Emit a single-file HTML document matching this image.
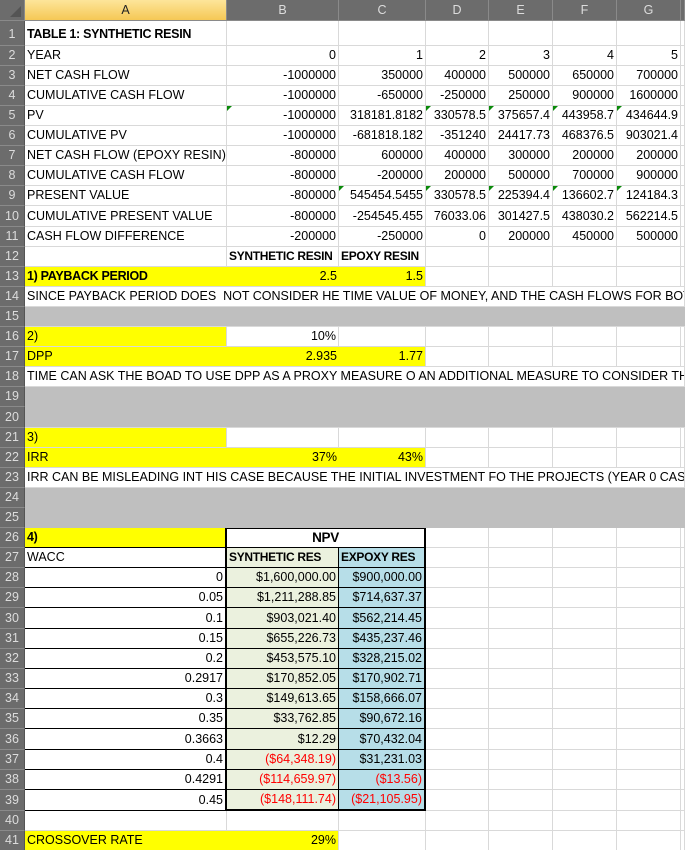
<!DOCTYPE html>
<html><head><meta charset="utf-8"><style>
html,body{margin:0;padding:0;background:#fff;width:685px;height:850px;overflow:hidden}
table{border-collapse:separate;border-spacing:0;table-layout:fixed;width:685px;font-family:"Liberation Sans",Arial,sans-serif;font-size:12.5px;color:#000}
td{border-right:1px solid #d9d9d9;border-bottom:1px solid #d9d9d9;padding:0 2px;white-space:nowrap;overflow:hidden;height:20px;line-height:19px;box-sizing:border-box;position:relative}
tr.t td{height:21px;line-height:20px}
td.h{background:#6c6c6c;color:#dcdcdc;border-right:1px solid #8a8a8a;border-bottom:1px solid #8a8a8a;text-align:center;padding:0;font-size:12.5px}
td.rh{background:#6c6c6c;color:#dcdcdc;border-right:1px solid #555;border-bottom:1px solid #8a8a8a;text-align:center;padding:0}
td.ha{background:linear-gradient(#fde59a,#f5c855);color:#222}
.r{text-align:right}
.b{font-weight:bold;letter-spacing:-0.3px}
.y{background:#ffff00}
.g{background:#bfbfbf;border-right:none}
.gr{background:#ebf1de}
.bl{background:#b7dee8}
.red{color:#ff0000}
.tr{position:absolute;left:0;top:0;width:0;height:0;border-top:5px solid #0a8a0a;border-right:5px solid transparent}
.br{border-right:2px solid #000}
.bb{border-bottom:1px solid #000}
.bk{border-right:1px solid #000;border-bottom:1px solid #000}
.bbt{border-bottom:2px solid #000}
</style></head><body>
<table>
<colgroup><col style="width:25px"><col style="width:202px"><col style="width:112px"><col style="width:87px"><col style="width:63px"><col style="width:64px"><col style="width:64px"><col style="width:64px"><col style="width:4px"></colgroup>
<tr><td class="h" style="height:21px;line-height:20px;position:relative"><div style="position:absolute;right:3px;bottom:3px;width:0;height:0;border-left:11px solid transparent;border-bottom:11px solid #545454"></div></td><td class="h ha" style="height:21px;line-height:20px">A</td><td class="h">B</td><td class="h">C</td><td class="h">D</td><td class="h">E</td><td class="h">F</td><td class="h">G</td><td class="h"></td></tr>
<tr><td class="rh" style="height:23px;line-height:22px;padding-top:2px">1</td><td class="b" style="height:23px;line-height:22px;padding-top:2px">TABLE 1: SYNTHETIC RESIN</td><td style="height:23px"></td><td></td><td></td><td></td><td></td><td></td><td></td></tr>
<tr><td class="rh">2</td><td>YEAR</td><td class="r">0</td><td class="r">1</td><td class="r">2</td><td class="r">3</td><td class="r">4</td><td class="r">5</td><td></td></tr>
<tr><td class="rh">3</td><td>NET CASH FLOW</td><td class="r">-1000000</td><td class="r">350000</td><td class="r">400000</td><td class="r">500000</td><td class="r">650000</td><td class="r">700000</td><td></td></tr>
<tr><td class="rh">4</td><td>CUMULATIVE CASH FLOW</td><td class="r">-1000000</td><td class="r">-650000</td><td class="r">-250000</td><td class="r">250000</td><td class="r">900000</td><td class="r">1600000</td><td></td></tr>
<tr><td class="rh">5</td><td>PV</td><td class="r"><span class="tr"></span>-1000000</td><td class="r">318181.8182</td><td class="r"><span class="tr"></span>330578.5</td><td class="r"><span class="tr"></span>375657.4</td><td class="r"><span class="tr"></span>443958.7</td><td class="r"><span class="tr"></span>434644.9</td><td></td></tr>
<tr><td class="rh">6</td><td>CUMULATIVE PV</td><td class="r">-1000000</td><td class="r">-681818.182</td><td class="r">-351240</td><td class="r">24417.73</td><td class="r">468376.5</td><td class="r">903021.4</td><td></td></tr>
<tr><td class="rh">7</td><td>NET CASH FLOW (EPOXY RESIN)</td><td class="r">-800000</td><td class="r">600000</td><td class="r">400000</td><td class="r">300000</td><td class="r">200000</td><td class="r">200000</td><td></td></tr>
<tr><td class="rh">8</td><td>CUMULATIVE CASH FLOW</td><td class="r">-800000</td><td class="r">-200000</td><td class="r">200000</td><td class="r">500000</td><td class="r">700000</td><td class="r">900000</td><td></td></tr>
<tr><td class="rh">9</td><td>PRESENT VALUE</td><td class="r">-800000</td><td class="r"><span class="tr"></span>545454.5455</td><td class="r"><span class="tr"></span>330578.5</td><td class="r"><span class="tr"></span>225394.4</td><td class="r"><span class="tr"></span>136602.7</td><td class="r"><span class="tr"></span>124184.3</td><td></td></tr>
<tr class="t"><td class="rh">10</td><td>CUMULATIVE PRESENT VALUE</td><td class="r">-800000</td><td class="r">-254545.455</td><td class="r">76033.06</td><td class="r">301427.5</td><td class="r">438030.2</td><td class="r">562214.5</td><td></td></tr>
<tr><td class="rh">11</td><td>CASH FLOW DIFFERENCE</td><td class="r">-200000</td><td class="r">-250000</td><td class="r">0</td><td class="r">200000</td><td class="r">450000</td><td class="r">500000</td><td></td></tr>
<tr><td class="rh">12</td><td></td><td class="b" style="font-size:12px">SYNTHETIC RESIN</td><td class="b" style="font-size:12px">EPOXY RESIN</td><td></td><td></td><td></td><td></td><td></td></tr>
<tr><td class="rh">13</td><td class="y b" style="border-right:none">1) PAYBACK PERIOD</td><td class="y r" style="border-right:none">2.5</td><td class="y r">1.5</td><td></td><td></td><td></td><td></td><td></td></tr>
<tr><td class="rh">14</td><td colspan="8">SINCE PAYBACK PERIOD DOES&nbsp; NOT CONSIDER HE TIME VALUE OF MONEY, AND THE CASH FLOWS FOR BOTH PROJECTS</td></tr>
<tr><td class="rh">15</td><td colspan="8" class="g"></td></tr>
<tr><td class="rh">16</td><td class="y">2)</td><td class="r">10%</td><td></td><td></td><td></td><td></td><td></td><td></td></tr>
<tr><td class="rh">17</td><td class="y" style="border-right:none">DPP</td><td class="y r" style="border-right:none">2.935</td><td class="y r">1.77</td><td></td><td></td><td></td><td></td><td></td></tr>
<tr><td class="rh">18</td><td colspan="8">TIME CAN ASK THE BOAD TO USE DPP AS A PROXY MEASURE O AN ADDITIONAL MEASURE TO CONSIDER THE TIME</td></tr>
<tr><td class="rh">19</td><td colspan="8" class="g" style="border-bottom-color:#bfbfbf"></td></tr>
<tr class="t"><td class="rh">20</td><td colspan="8" class="g"></td></tr>
<tr><td class="rh">21</td><td class="y">3)</td><td></td><td></td><td></td><td></td><td></td><td></td><td></td></tr>
<tr><td class="rh">22</td><td class="y" style="border-right:none">IRR</td><td class="y r" style="border-right:none">37%</td><td class="y r">43%</td><td></td><td></td><td></td><td></td><td></td></tr>
<tr><td class="rh">23</td><td colspan="8">IRR CAN BE MISLEADING INT HIS CASE BECAUSE THE INITIAL INVESTMENT FO THE PROJECTS (YEAR 0 CASH FLOWS)</td></tr>
<tr><td class="rh">24</td><td colspan="8" class="g" style="border-bottom-color:#bfbfbf"></td></tr>
<tr><td class="rh">25</td><td colspan="8" class="g" style="border-bottom-color:#bfbfbf"></td></tr>
<tr><td class="rh">26</td><td class="y b br bb">4)</td><td colspan="2" class="b br" style="text-align:center;border-top:1px solid #000;border-bottom:1px solid #000;font-size:13.5px;line-height:18px">NPV</td><td></td><td></td><td></td><td></td><td></td></tr>
<tr><td class="rh">27</td><td class="br bb">WACC</td><td class="b gr bk" style="font-size:12px">SYNTHETIC RES</td><td class="b bl br bb" style="font-size:12px">EXPOXY RES</td><td></td><td></td><td></td><td></td><td></td></tr>
<tr><td class="rh">28</td><td class="r br bb">0</td><td class="r gr bk">$1,600,000.00</td><td class="r bl br bb">$900,000.00</td><td></td><td></td><td></td><td></td><td></td></tr>
<tr><td class="rh">29</td><td class="r br bb">0.05</td><td class="r gr bk">$1,211,288.85</td><td class="r bl br bb">$714,637.37</td><td></td><td></td><td></td><td></td><td></td></tr>
<tr class="t"><td class="rh">30</td><td class="r br bb">0.1</td><td class="r gr bk">$903,021.40</td><td class="r bl br bb">$562,214.45</td><td></td><td></td><td></td><td></td><td></td></tr>
<tr><td class="rh">31</td><td class="r br bb">0.15</td><td class="r gr bk">$655,226.73</td><td class="r bl br bb">$435,237.46</td><td></td><td></td><td></td><td></td><td></td></tr>
<tr><td class="rh">32</td><td class="r br bb">0.2</td><td class="r gr bk">$453,575.10</td><td class="r bl br bb">$328,215.02</td><td></td><td></td><td></td><td></td><td></td></tr>
<tr><td class="rh">33</td><td class="r br bb">0.2917</td><td class="r gr bk">$170,852.05</td><td class="r bl br bb">$170,902.71</td><td></td><td></td><td></td><td></td><td></td></tr>
<tr><td class="rh">34</td><td class="r br bb">0.3</td><td class="r gr bk">$149,613.65</td><td class="r bl br bb">$158,666.07</td><td></td><td></td><td></td><td></td><td></td></tr>
<tr><td class="rh">35</td><td class="r br bb">0.35</td><td class="r gr bk">$33,762.85</td><td class="r bl br bb">$90,672.16</td><td></td><td></td><td></td><td></td><td></td></tr>
<tr class="t"><td class="rh">36</td><td class="r br bb">0.3663</td><td class="r gr bk">$12.29</td><td class="r bl br bb">$70,432.04</td><td></td><td></td><td></td><td></td><td></td></tr>
<tr><td class="rh">37</td><td class="r br bb">0.4</td><td class="r gr bk red">($64,348.19)</td><td class="r bl br bb">$31,231.03</td><td></td><td></td><td></td><td></td><td></td></tr>
<tr><td class="rh">38</td><td class="r br bb">0.4291</td><td class="r gr bk red">($114,659.97)</td><td class="r bl br bb red">($13.56)</td><td></td><td></td><td></td><td></td><td></td></tr>
<tr><td class="rh">39</td><td class="r br bb">0.45</td><td class="r gr bk red bbt">($148,111.74)</td><td class="r bl br red bbt">($21,105.95)</td><td></td><td></td><td></td><td></td><td></td></tr>
<tr><td class="rh">40</td><td></td><td></td><td></td><td></td><td></td><td></td><td></td><td></td></tr>
<tr><td class="rh">41</td><td class="y" style="border-right:none">CROSSOVER RATE</td><td class="y r">29%</td><td></td><td></td><td></td><td></td><td></td><td></td></tr>
</table>
</body></html>
